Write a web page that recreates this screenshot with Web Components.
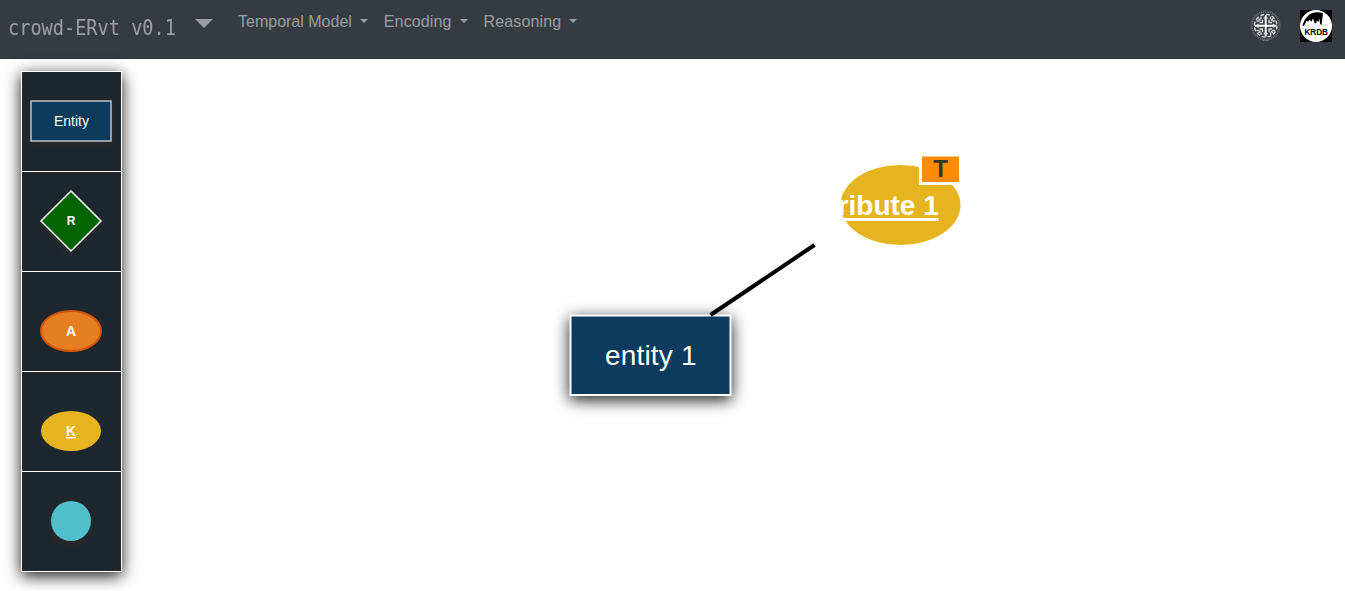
<!DOCTYPE html>
<html lang="en">
<head>
<meta charset="utf-8">
<title>crowd-ERvt</title>
<style>
html,body{margin:0;height:100%;background:#fff;overflow:hidden;font-family:"Liberation Sans",Arial,sans-serif}
</style>
</head>
<body>
<er-app></er-app>
<script>
function define(name, html) {
  const template = document.createElement('template');
  template.innerHTML = html;
  customElements.define(name, class extends HTMLElement {
    constructor() {
      super();
      this.attachShadow({mode: 'open'}).append(template.content.cloneNode(true));
    }
  });
}

define('er-brand', `<style>
:host{display:block;width:178px;height:40px;color:rgba(255,255,255,.5)}
span{display:block;width:max-content;white-space:pre;font:200 18.6px/40px "DejaVu Sans Mono","Liberation Mono",monospace;transform:scaleY(1.1);transform-origin:0 25px}
</style><span><slot></slot></span>`);

define('er-toggle', `<style>
:host{display:block;width:18px;height:9px;margin:19px 0 0 9px}
svg{display:block}
</style><svg width="18" height="9"><path d="M0 0H18L9 9Z" fill="#9a9da0"/></svg>`);

define('er-menu', `<style>
:host{display:flex;align-items:center;height:24px;color:rgba(255,255,255,.5);font-size:16px;line-height:24px;white-space:nowrap}
i{margin-left:8px;margin-top:-2px;border:4.8px solid transparent;border-top-color:currentColor;border-bottom:0}
</style><slot></slot><i></i>`);

define('er-seal', `<style>:host{display:block;width:32px;height:32px}svg{display:block}</style>
<svg width="32" height="32" viewBox="0 0 32 32" fill="none">
<circle cx="15.700" cy="15.500" r="14" stroke="#aeb1b4" stroke-width="2" stroke-dasharray="1 .9" opacity=".5"/>
<circle cx="15.700" cy="15.700" r="12" fill="#343a40"/>
<g stroke="#d8dadb" stroke-width="1.300">
<path d="M15.700 5V26.500M5 15.700H26.500" stroke-width="1.900" stroke="#fff"/>
<path d="M13.700 8h4M13.700 23.500h4M8 13.700v4M23.500 13.700v4" stroke-width="1.500"/>
<path d="M13 12.500H9.500M12.500 13V9.500M18.500 12.500H22M19 13V9.500M13 19H9.500M12.500 18.500V22M18.500 19H22M19 18.500V22"/>
<path d="M10.500 10.500L8.500 8.500M21 10.500L23 8.500M10.500 21L8.500 23M21 21L23 23M11 6.500V9.300M20.500 6.500V9.300M11 25V22.200M20.500 25V22.200M6.500 11H9.300M25 11H22.200M6.500 20.500H9.300M25 20.500H22.200"/>
<circle cx="15.700" cy="15.700" r="11.300" stroke-width="1.400" stroke-dasharray="3.900 2.020"/>
</g>
<path d="M13 30.300h6" stroke="#8a8e92" stroke-dasharray="1.300 .5"/>
</svg>`);

define('er-krdb', `<style>:host{display:block;width:32px;height:32px}svg{display:block}text{font:bold 8.800px "Liberation Sans",Arial,sans-serif}</style>
<svg width="32" height="32" viewBox="0 0 32 32">
<path fill="#000" d="M0 0H32V32H0Z"/><circle cx="16" cy="16" r="16" fill="#fff"/>
<path d="M2.500 15.500C4.500 9 8 4.500 12.500 3C16 1.900 20 2.300 23 3.300L21.500 15L20 14L19.500 8.500L18.500 12L17 10.500L16 13.500L14.500 13L13 8.500L11 12L10 9.500L8 11.500L6.500 11L4 16Z"/>
<text x="16.200" y="25" text-anchor="middle" textLength="23.500" lengthAdjust="spacingAndGlyphs">KRDB</text>
</svg>`);

define('er-navbar', `<style>
:host{display:flex;align-items:flex-start;box-sizing:border-box;height:59px;padding:0 13px 0 8px;background:#363a41;border-bottom:1px solid #303439}
nav{display:flex;gap:16px;margin:10px 0 0 25px}
.brand{margin-top:9px}
.logos{display:flex;gap:18px;margin:10px 0 0 auto}
</style>
<er-brand class="brand">crowd-ERvt v0.1</er-brand><er-toggle></er-toggle>
<nav><er-menu>Temporal Model</er-menu><er-menu style="letter-spacing:.12px">Encoding</er-menu><er-menu style="letter-spacing:.15px">Reasoning</er-menu></nav>
<div class="logos"><er-seal></er-seal><er-krdb></er-krdb></div>`);

define('er-stencil', `<style>
:host{display:block;height:99px;background:#1e272e;border-bottom:1px solid #fff}
</style><slot></slot>`);

define('er-palette', `<style>
:host{display:flex;flex-direction:column;width:99px;border:1px solid #fff;border-bottom:0;box-shadow:0 4px 15px rgba(0,0,0,.9)}
svg{display:block}
text{font:bold 14px "Liberation Sans",Arial,sans-serif;fill:#fff;text-anchor:middle}
.s{filter:drop-shadow(0 3px 4px rgba(45,40,38,.8))}
</style>
<er-stencil><svg width="99" height="99"><g class="s"><rect x="9" y="29" width="80" height="40" fill="#0d3b5e" stroke="#bdc3c7" stroke-width="1.500"/></g><text x="49.500" y="54" style="font-weight:400">Entity</text></svg></er-stencil>
<er-stencil><svg width="99" height="99"><path class="s" d="M49 19L79 49L49 79L19 49Z" fill="#006400" stroke="#fff" stroke-width="1.500"/><text x="49" y="53" style="font-size:12px">R</text></svg></er-stencil>
<er-stencil><svg width="99" height="99"><ellipse cx="49" cy="59" rx="30" ry="20" fill="#e67e22" stroke="#d35400" stroke-width="2"/><text x="49" y="64">A</text></svg></er-stencil>
<er-stencil><svg width="99" height="99"><ellipse cx="49" cy="59" rx="30" ry="20" fill="#e6b41e"/><text x="49" y="64" text-decoration="underline">K</text></svg></er-stencil>
<er-stencil><svg width="99" height="99"><circle class="s" cx="49" cy="49" r="20" fill="#52bfcc"/></svg></er-stencil>`);

define('er-canvas', `<style>
:host{display:block;overflow:hidden}
svg{display:block}
text{font:28px "Liberation Sans",Arial,sans-serif;fill:#fff}
.entity{filter:drop-shadow(0 4px 8px rgba(0,0,0,.9))}
.key{font-weight:bold}
</style>
<svg width="1223" height="532" viewBox="122 59 1223 532">
<g class="entity"><rect x="570.500" y="315.500" width="160" height="79.500" fill="#0d3b5e" stroke="#fff" stroke-width="2"/></g>
<text x="605" y="365" textLength="91.500">entity 1</text>
<path d="M710.500 315L814.500 245" stroke="#000" stroke-width="4"/>
<ellipse cx="900.500" cy="205" rx="60" ry="40" fill="#e6b41e"/>
<text class="key" x="938.800" y="215" text-anchor="end">attribute 1</text>
<path d="M820 219.500H938.500" stroke="#fff" stroke-width="3"/>
<rect x="920.500" y="155" width="40" height="28.500" fill="#ff8c00" stroke="#fff" stroke-width="3"/>
<text x="940.500" y="177" text-anchor="middle" style="font-size:24px;font-weight:bold;fill:#333">T</text>
</svg>`);

define('er-app', `<style>
:host{display:flex;flex-direction:column;height:591px}
main{flex:1;display:flex;align-items:flex-start;min-height:0}
er-palette{flex:none;margin:12px 0 0 21px}
er-canvas{flex:1}
</style>
<er-navbar></er-navbar>
<main><er-palette></er-palette><er-canvas></er-canvas></main>`);
</script>
</body>
</html>
